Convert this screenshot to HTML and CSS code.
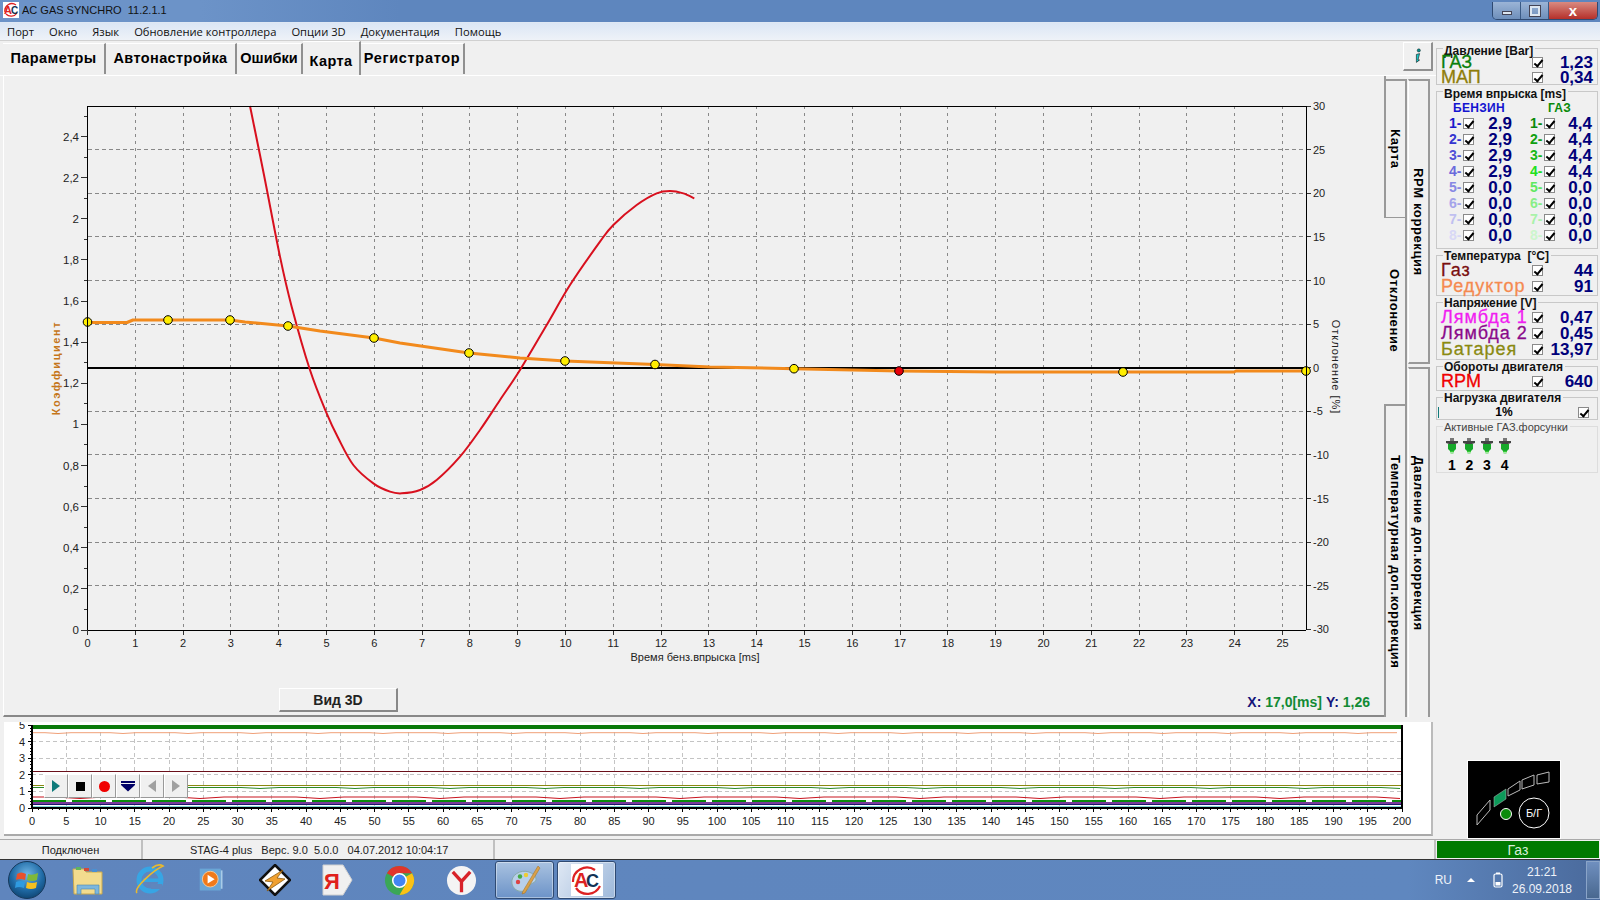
FILE: index.html
```html
<!DOCTYPE html>
<html lang="ru">
<head>
  <meta charset="UTF-8">
  <title>AC GAS SYNCHRO</title>
  <link rel="stylesheet" href="styles.css">
</head>
<body>

<!-- Title bar -->
<div class="titleBar">
  <svg class="titleLogo" viewBox="0 0 16 16">
    <rect width="16" height="16" fill="#fff"/>
    <path d="M2 10 A7 7 0 0 1 13 3" fill="none" stroke="#d22" stroke-width="1.3"/>
    <path d="M3 12 A7 7 0 0 0 14 11" fill="none" stroke="#d22" stroke-width="1.3"/>
    <text x="1" y="12" class="logoA">A</text>
    <text x="8" y="12" class="logoC">C</text>
  </svg>
  <span class="titleText">AC GAS SYNCHRO&nbsp; 11.2.1.1</span>
  <div class="windowBtns">
    <div class="winBtn"><span class="winMin"></span></div>
    <div class="winBtn"><span class="winMax"></span></div>
    <div class="winBtn winClose">x</div>
  </div>
</div>

<!-- Menu -->
<div class="menuBar">
  <span>Порт</span>
  <span>Окно</span>
  <span>Язык</span>
  <span>Обновление контроллера</span>
  <span>Опции 3D</span>
  <span>Документация</span>
  <span>Помощь</span>
</div>

<div class="workArea">
  <div class="leftCol">

    <div class="tabRow">
      <div class="tab tabParams">Параметры</div>
      <div class="tab tabAuto">Автонастройка</div>
      <div class="tab tabErrors">Ошибки</div>
      <div class="tab tabMap active">Карта</div>
      <div class="tab tabLog">Регистратор</div>
      <div class="infoBtn">
        <svg viewBox="0 0 10 20" width="8" height="16">
          <circle cx="6" cy="3" r="2" fill="#0a8f8f" stroke="#000" stroke-width=".5"/>
          <path d="M3 8 L7 7 L5 15 L7 15 L3 18 L3 16 Z" fill="#19c8c8" stroke="#000" stroke-width=".7"/>
        </svg>
      </div>
    </div>

    <div class="tabBody">
      <div class="mapPanel">
        <svg id="mapChart" class="mapChart" viewBox="4 76 1382 604"></svg>
        <div class="mapFooter">
          <div class="view3d">Вид 3D</div>
          <div class="cursorInfo"><b>X:</b> <i>17,0[ms]</i> <b>Y:</b> <i>1,26</i></div>
        </div>
      </div>
      <div class="sideTabs">
        <div class="sideCol colOne">
          <div class="sideTab tabKarta"><span>Карта</span></div>
          <div class="sideTab tabDev"><span>Отклонение</span></div>
          <div class="sideTab tabTemp"><span>Температурная доп.коррекция</span></div>
        </div>
        <div class="sideCol colTwo">
          <div class="sideTab tabRpm"><span>RPM коррекция</span></div>
          <div class="sideTab tabPress"><span>Давление доп.коррекция</span></div>
        </div>
      </div>
    </div>

    <div class="logPanel">
      <svg id="logChart" class="logChart" viewBox="4 722 1429 113"></svg>
      <div class="logTools">
        <div class="logBtn"><span class="icoPlay"></span></div>
        <div class="logBtn"><span class="icoStop"></span></div>
        <div class="logBtn"><span class="icoRec"></span></div>
        <div class="logBtn"><span class="icoDown"></span></div>
        <div class="logBtn"><span class="icoPrev"></span></div>
        <div class="logBtn"><span class="icoNext"></span></div>
      </div>
    </div>
  </div>

  <!-- Live values -->
  <div class="sidebar">
    <div class="group gPress">
      <div class="groupTitle">Давление [Bar]</div>
      <div class="row"><span class="rowName cGas">ГАЗ</span><span class="chk"></span><span class="rowVal">1,23</span></div>
      <div class="row"><span class="rowName cMap">МАП</span><span class="chk"></span><span class="rowVal">0,34</span></div>
    </div>

    <div class="group gInj">
      <div class="groupTitle">Время впрыска [ms]</div>
      <div class="injHead"><span class="headPetrol">БЕНЗИН</span><span class="headGas">ГАЗ</span></div>
      <div class="injRow"><span class="num p1">1-</span><span class="chk"></span><span class="injVal">2,9</span><span class="num g1">1-</span><span class="chk"></span><span class="injVal">4,4</span></div>
      <div class="injRow"><span class="num p2">2-</span><span class="chk"></span><span class="injVal">2,9</span><span class="num g2">2-</span><span class="chk"></span><span class="injVal">4,4</span></div>
      <div class="injRow"><span class="num p3">3-</span><span class="chk"></span><span class="injVal">2,9</span><span class="num g3">3-</span><span class="chk"></span><span class="injVal">4,4</span></div>
      <div class="injRow"><span class="num p4">4-</span><span class="chk"></span><span class="injVal">2,9</span><span class="num g4">4-</span><span class="chk"></span><span class="injVal">4,4</span></div>
      <div class="injRow"><span class="num p5">5-</span><span class="chk"></span><span class="injVal">0,0</span><span class="num g5">5-</span><span class="chk"></span><span class="injVal">0,0</span></div>
      <div class="injRow"><span class="num p6">6-</span><span class="chk"></span><span class="injVal">0,0</span><span class="num g6">6-</span><span class="chk"></span><span class="injVal">0,0</span></div>
      <div class="injRow"><span class="num p7">7-</span><span class="chk"></span><span class="injVal">0,0</span><span class="num g7">7-</span><span class="chk"></span><span class="injVal">0,0</span></div>
      <div class="injRow"><span class="num p8">8-</span><span class="chk"></span><span class="injVal">0,0</span><span class="num g8">8-</span><span class="chk"></span><span class="injVal">0,0</span></div>
    </div>

    <div class="group tallRows gTemp">
      <div class="groupTitle">Температура&nbsp; [°C]</div>
      <div class="row"><span class="rowName cTempGas">Газ</span><span class="chk"></span><span class="rowVal">44</span></div>
      <div class="row"><span class="rowName cReducer">Редуктор</span><span class="chk"></span><span class="rowVal">91</span></div>
    </div>

    <div class="group tallRows gVolt">
      <div class="groupTitle">Напряжение [V]</div>
      <div class="row"><span class="rowName cL1">Лямбда 1</span><span class="chk"></span><span class="rowVal">0,47</span></div>
      <div class="row"><span class="rowName cL2">Лямбда 2</span><span class="chk"></span><span class="rowVal">0,45</span></div>
      <div class="row"><span class="rowName cBat">Батарея</span><span class="chk"></span><span class="rowVal">13,97</span></div>
    </div>

    <div class="group tallRows gRpm">
      <div class="groupTitle">Обороты двигателя</div>
      <div class="row"><span class="rowName cRpm">RPM</span><span class="chk"></span><span class="rowVal">640</span></div>
    </div>

    <div class="group gLoad">
      <div class="groupTitle">Нагрузка двигателя</div>
      <div class="loadRow"><span class="loadBar"></span><span class="loadPct">1%</span><span class="chk"></span></div>
    </div>

    <div class="group gNozzles">
      <div class="groupTitle thin">Активные ГАЗ.форсунки</div>
      <div class="nozzles">
        <div class="nozzle"><svg viewBox="0 0 14 17"><use href="#injector"/></svg><span>1</span></div>
        <div class="nozzle"><svg viewBox="0 0 14 17"><use href="#injector"/></svg><span>2</span></div>
        <div class="nozzle"><svg viewBox="0 0 14 17"><use href="#injector"/></svg><span>3</span></div>
        <div class="nozzle"><svg viewBox="0 0 14 17"><use href="#injector"/></svg><span>4</span></div>
      </div>
    </div>

    <div class="indicator">
      <svg viewBox="0 0 92 77" width="92" height="77">
        <rect width="92" height="77" fill="#000"/>
        <g fill="none" stroke="#bbb" stroke-width="1">
          <path d="M9 54 L22 39 L22 49 L9 64 Z"/>
          <path d="M40 28 L52 20 L52 29 L40 35 Z"/>
          <path d="M54 19 L66 14 L66 24 L54 28 Z"/>
          <path d="M69 14 L81 11 L81 21 L69 23 Z"/>
        </g>
        <path d="M26 36 L38 28 L38 38 L26 46 Z" fill="#0d9a5a" stroke="#bbb" stroke-width=".5"/>
        <circle cx="38" cy="53" r="5.5" fill="#0a8a0a" stroke="#fff"/>
        <circle cx="66" cy="52" r="15" fill="none" stroke="#fff" stroke-width="1"/>
        <text x="66" y="56" class="bgLabel">Б/Г</text>
      </svg>
    </div>
  </div>
</div>

<!-- Status -->
<div class="statusBar">
  <div class="statusCell cellConn">Подключен</div>
  <div class="statusCell cellInfo">STAG-4 plus   Верс. 9.0  5.0.0   04.07.2012 10:04:17</div>
  <div class="statusCell cellRest"></div>
  <div class="fuelState">Газ</div>
</div>

<!-- Taskbar -->
<div class="taskbar">
  <div class="startOrb">
    <svg viewBox="0 0 40 40" width="40" height="40">
      <defs>
        <radialGradient id="orbFill" cx=".5" cy=".35" r=".7">
          <stop offset="0" stop-color="#6fb6e6"/>
          <stop offset=".6" stop-color="#1f6aa5"/>
          <stop offset="1" stop-color="#0c3f6a"/>
        </radialGradient>
      </defs>
      <circle cx="20" cy="20" r="18.5" fill="url(#orbFill)" stroke="#16395c"/>
      <path d="M10 14 Q14 11 19 14 L18 20 Q13 18 9 20 Z" fill="#e8512c"/>
      <path d="M21 14 Q25 16 31 13 L30 20 Q25 22 20 20 Z" fill="#7fb93a"/>
      <path d="M9 22 Q13 20 18 22 L17 28 Q12 26 8 28 Z" fill="#2f9be0"/>
      <path d="M20 22 Q25 24 30 22 L29 28 Q24 30 19 28 Z" fill="#f6c01e"/>
    </svg>
  </div>

  <div class="taskSlot">
    <svg viewBox="0 0 32 32" width="32" height="32">
      <path d="M1 5 H12 L14 8 H30 V30 H2 Z" fill="#f3dc8e" stroke="#c9a94e"/>
      <rect x="4" y="3" width="5" height="3" fill="#5fb55f"/>
      <rect x="12" y="4" width="5" height="3" fill="#d24a3a"/>
      <rect x="20" y="5" width="5" height="3" fill="#4a90d2"/>
      <path d="M5 30 V21 H27 V30 H23 V25 H9 V30 Z" fill="#7db7de" stroke="#4f88ad" stroke-width=".6"/>
    </svg>
  </div>
  <div class="taskSlot">
    <svg viewBox="0 0 32 32" width="32" height="32">
      <circle cx="16" cy="16" r="11" fill="none" stroke="#37a5e4" stroke-width="5"/>
      <rect x="9" y="14.5" width="16" height="3.5" fill="#37a5e4"/>
      <rect x="17" y="20" width="11" height="5" fill="#5f87bd"/>
      <path d="M3 29 C-1 24 20 6 29 2 C26 0 22 1 18 4" fill="none" stroke="#e8b92f" stroke-width="1.6"/>
    </svg>
  </div>
  <div class="taskSlot">
    <svg viewBox="0 0 32 32" width="28" height="28">
      <rect x="2" y="3" width="24" height="25" fill="#6aa6d6"/>
      <rect x="26" y="5" width="2" height="21" fill="#a8cce8"/>
      <circle cx="14" cy="15" r="9" fill="#f07a1a" stroke="#f6d0a0"/>
      <path d="M11 10 L19 15 L11 20 Z" fill="#fff"/>
    </svg>
  </div>
  <div class="taskSlot">
    <svg viewBox="0 0 32 32" width="32" height="32">
      <path d="M16 1 L31 16 L16 31 L1 16 Z" fill="#fff" stroke="#111" stroke-width="2.5"/>
      <path d="M24 6 L6 17 L14 18 L8 27 L26 15 L18 14 Z" fill="#f0a030" stroke="#8a5a10" stroke-width=".8"/>
    </svg>
  </div>
  <div class="taskSlot">
    <svg viewBox="0 0 32 32" width="32" height="32">
      <path d="M2 1 H22 L31 16 L22 31 H2 Z" fill="#f0f0f0" stroke="#d0d0d0"/>
      <text x="11" y="25" class="yaLetter">Я</text>
    </svg>
  </div>
  <div class="taskSlot">
    <svg viewBox="0 0 32 32" width="31" height="31">
      <circle cx="16" cy="16" r="15" fill="#3aa757"/>
      <path d="M16 1 A15 15 0 0 1 29 8.5 L16 8.5 A7.5 7.5 0 0 0 9.5 12.2 L3 8.5 A15 15 0 0 1 16 1 Z" fill="#e0352b"/>
      <path d="M29 8.5 A15 15 0 0 1 16 31 L22.5 19.8 A7.5 7.5 0 0 0 22.5 12.2 Z" fill="#fbc116"/>
      <circle cx="16" cy="16" r="7" fill="#4285f4" stroke="#fff" stroke-width="1.6"/>
    </svg>
  </div>
  <div class="taskSlot">
    <svg viewBox="0 0 32 32" width="31" height="31">
      <circle cx="16" cy="16" r="15" fill="#f4f4f4"/>
      <path d="M7 7 L16 17 L25 7 M16 17 V28" fill="none" stroke="#d8232a" stroke-width="3.4"/>
    </svg>
  </div>

  <div class="taskBtn">
    <svg viewBox="0 0 32 32" width="32" height="32">
      <path d="M3 20 C1 11 12 5 20 8 C28 11 29 17 24 19 C20 20 21 24 18 26 C12 29 5 27 3 20 Z" fill="#b8d0ea" stroke="#8aa"/>
      <circle cx="9" cy="18" r="2.2" fill="#d44"/>
      <circle cx="11" cy="12.5" r="2.2" fill="#4a4"/>
      <circle cx="17" cy="11" r="2.2" fill="#ec3"/>
      <path d="M29 2 L31 4 L16 29 L13 30 L14 27 Z" fill="#d9a14a" stroke="#a06f20" stroke-width=".5"/>
    </svg>
  </div>
  <div class="taskBtn open">
    <svg viewBox="0 0 32 32" width="32" height="32">
      <rect width="32" height="32" fill="#fff"/>
      <path d="M2 18 A14 14 0 0 1 24 6" fill="none" stroke="#d22" stroke-width="2.2"/>
      <path d="M5 24 A14 14 0 0 0 29 22" fill="none" stroke="#d22" stroke-width="2.2"/>
      <text x="3" y="23" class="acA">A</text>
      <text x="15" y="23" class="acC">C</text>
    </svg>
  </div>

  <div class="tray">
    <span class="trayLang">RU</span>
    <span class="trayArrow"></span>
    <svg viewBox="0 0 10 16" width="10" height="16">
      <rect x="1" y="2" width="8" height="13" rx="1.5" fill="none" stroke="#fff" stroke-width="1.2"/>
      <rect x="3" y="0.5" width="4" height="1.5" fill="#fff"/>
      <rect x="2.5" y="10" width="5" height="3.5" fill="#fff"/>
    </svg>
    <div class="clock">21:21<br>26.09.2018</div>
    <div class="showDesktop"></div>
  </div>
</div>

<svg class="defs" width="0" height="0">
  <symbol id="injector" viewBox="0 0 14 17">
    <rect x="5" y="0" width="4" height="3" fill="#777"/>
    <path d="M1 3 H13 V5 L10 6 H4 L1 5 Z" fill="#444"/>
    <path d="M3 6 H11 V11 L9 13 H5 L3 11 Z" fill="#17a82a"/>
    <rect x="5" y="13" width="4" height="1.4" fill="#3c3"/>
    <rect x="5.5" y="15" width="3" height="1" fill="#9ee49e"/>
  </symbol>
</svg>

<script src="chart.js"></script>
</body>
</html>
```

FILE: styles.css
```css
* { box-sizing: border-box; }

body {
  margin: 0;
  width: 1600px;
  height: 900px;
  overflow: hidden;
  display: flex;
  flex-direction: column;
  font-family: "Liberation Sans", Arial, sans-serif;
  background: #f0f0f0;
  color: #000;
}

.defs { position: absolute; }

/* title + menu */
.titleBar {
  height: 23px;
  flex: none;
  display: flex;
  align-items: center;
  padding-left: 3px;
  padding-bottom: 3px;
  background: linear-gradient(90deg, #6c93c8 0, #6c93c8 200px, #5e86be 400px, #5e86be 100%);
  border-bottom: 1px solid #dfe8f4;
}
.titleLogo { width: 16px; height: 16px; margin-right: 3px; }
.logoA { font: bold 11px "Liberation Sans", sans-serif; fill: #d22; }
.logoC { font: bold 10px "Liberation Sans", sans-serif; fill: #135; }
.titleText { font-size: 11px; color: #111; }

.windowBtns {
  margin-left: auto;
  margin-right: 2px;
  margin-top: 2px;
  display: flex;
  align-self: flex-start;
  height: 18px;
  border: 1px solid #2f4a72;
  border-top: 0;
  border-radius: 0 0 5px 5px;
  overflow: hidden;
}
.winBtn {
  width: 28px;
  display: flex;
  align-items: center;
  justify-content: center;
  background: linear-gradient(#9bb4d6, #6e8fbb);
  border-right: 1px solid #3a5a85;
}
.winMin { width: 10px; height: 4px; margin-top: 5px; background: #dde6f0; border: 1px solid #445; }
.winMax { width: 10px; height: 10px; background: transparent; border: 2px solid #dde6f0; outline: 1px solid #445; }
.winClose {
  width: 48px;
  border-right: 0;
  background: linear-gradient(#d98a80, #b5302a);
  color: #fff;
  font-weight: bold;
  font-size: 15px;
  line-height: 14px;
}

.menuBar {
  height: 18px;
  flex: none;
  display: flex;
  align-items: center;
  padding-left: 7px;
  font-family: "Open Sans", sans-serif;
  font-size: 11.2px;
  background: linear-gradient(#dbe6f5, #eef2f8);
  border-bottom: 1px solid #d0d0d0;
  color: #111;
}
.menuBar span { margin-right: 15px; white-space: nowrap; }

/* main */
.workArea { flex: 1; min-height: 0; display: flex; }
.leftCol { width: 1436px; display: flex; flex-direction: column; }

.tabRow {
  height: 35px;
  flex: none;
  display: flex;
  align-items: flex-end;
  padding-left: 3px;
  border-bottom: 1px solid #fff;
}
.tab {
  height: 31px;
  display: flex;
  align-items: center;
  justify-content: center;
  padding-bottom: 2px;
  font-size: 14.5px;
  font-weight: bold;
  letter-spacing: .4px;
  border-right: 2px solid #909090;
  border-top: 1px solid #fff;
  margin-bottom: 1px;
}
.tabParams { width: 103px; }
.tabAuto { width: 131px; }
.tabErrors { width: 66px; letter-spacing: 0; }
.tabMap { width: 58px; }
.tabLog { width: 104px; letter-spacing: .7px; }
.tab.active { height: 34px; margin-bottom: 0; background: #f0f0f0; font-size: 14.5px; padding-top: 4px; padding-bottom: 0; }

.infoBtn {
  margin-left: auto;
  margin-right: 3px;
  margin-bottom: 4px;
  width: 30px;
  height: 29px;
  display: flex;
  align-items: center;
  justify-content: center;
  border: 1px solid #fff;
  border-right: 2px solid #909090;
  border-bottom: 2px solid #909090;
}

.tabBody { height: 641px; flex: none; display: flex; padding-left: 3px; }
.mapPanel {
  width: 1383px;
  display: flex;
  flex-direction: column;
  border-left: 1px solid #fff;
  border-bottom: 2px solid #888;
  border-right: 2px solid #999;
}
.mapChart { width: 1382px; height: 604px; flex: none; display: block; }
.mapFooter { flex: 1; display: flex; align-items: flex-start; padding-left: 275px; padding-top: 8px; }
.view3d {
  width: 119px;
  height: 24px;
  display: flex;
  align-items: center;
  justify-content: center;
  font-size: 14px;
  font-weight: bold;
  color: #222;
  border: 1px solid #fff;
  border-right: 2px solid #888;
  border-bottom: 2px solid #888;
}
.cursorInfo {
  margin-left: auto;
  margin-right: 14px;
  margin-top: 6px;
  font-size: 14px;
  font-weight: bold;
  white-space: nowrap;
}
.cursorInfo b { color: #14147a; }
.cursorInfo i { font-style: normal; color: #128a34; }

/* tabs on their side */
.sideTabs { width: 44px; display: flex; padding-top: 3px; }
.sideCol { display: flex; flex-direction: column; }
.colOne { width: 21px; }
.colTwo { width: 22px; margin-left: 1px; }
.sideTab {
  display: flex;
  justify-content: center;
  font-size: 13px;
  font-weight: bold;
  letter-spacing: .6px;
  border-right: 2px solid #999;
  border-top: 2px solid #999;
  border-left: 1px solid #fff;
  writing-mode: vertical-rl;
  align-items: center;
}
.tabKarta { height: 139px; border-left: 2px solid #999; border-bottom: 1px solid #999; margin-left: -2px; }
.tabDev { height: 186px; border-top: 0; border-left: 0; margin-left: -2px; background: #f0f0f0; }
.tabTemp { flex: 1; border-left: 2px solid #999; margin-left: -2px; }
.tabRpm { height: 285px; border-bottom: 2px solid #999; }
.tabPress { flex: 1; margin-top: 3px; }

.logPanel {
  height: 114px;
  flex: none;
  margin: 5px 3px 3px 4px;
  position: relative;
  background: #fff;
  border-right: 2px solid #bbb;
  border-bottom: 2px solid #aaa;
}
.logChart { width: 1429px; height: 113px; display: block; }
.logTools { position: absolute; left: 40px; top: 52px; display: flex; }
.logBtn {
  width: 24px;
  height: 24px;
  display: flex;
  align-items: center;
  justify-content: center;
  background: #f0f0f0;
  border: 1px solid #fff;
  border-right: 1px solid #999;
  border-bottom: 1px solid #999;
}
.icoPlay { border-left: 8px solid #0e7a7a; border-top: 6px solid transparent; border-bottom: 6px solid transparent; }
.icoStop { width: 9px; height: 9px; background: #000; }
.icoRec { width: 11px; height: 11px; border-radius: 50%; background: #f00000; }
.icoDown { width: 14px; height: 11px; background: linear-gradient(#006 0, #006 2px, #f0f0f0 2px, #f0f0f0 3px, #006 3px); clip-path: polygon(0 0, 100% 0, 100% 40%, 50% 100%, 0 40%); }
.icoPrev { border-right: 8px solid #a0a0a0; border-top: 6px solid transparent; border-bottom: 6px solid transparent; }
.icoNext { border-left: 8px solid #a0a0a0; border-top: 6px solid transparent; border-bottom: 6px solid transparent; }

/* right column */
.sidebar {
  flex: 1;
  display: flex;
  flex-direction: column;
  gap: 6px;
  padding: 7px 2px 1px 0;
}
.group { border: 1px solid #c8c8c8; padding: 0 4px 0 4px; flex: none; }
.gPress { height: 37px; }
.gInj { height: 158px; }
.gTemp { height: 41px; }
.gVolt { height: 58px; }
.gRpm { height: 25px; }
.gLoad { height: 23px; }
.gNozzles { height: 47px; border-color: #ddd; }

.groupTitle {
  display: table;
  margin: -7px 0 -1px 2px;
  padding: 0 2px 0 1px;
  height: 14px;
  line-height: 14px;
  font-size: 12px;
  font-weight: bold;
  background: #f0f0f0;
  color: #111;
  white-space: nowrap;
}
.gPress .groupTitle, .gInj .groupTitle { margin: -5px 0 -3px 2px; }
.groupTitle.thin { font-weight: normal; font-size: 11px; color: #444; }

.row {
  height: 15px;
  display: grid;
  grid-template-columns: 91px 12px 1fr;
  align-items: center;
  position: relative;
}
.tallRows .row { height: 16px; }
.rowName {
  font-size: 18px;
  line-height: 15px;
  white-space: nowrap;
  letter-spacing: 1px;
  -webkit-text-stroke: .3px;
}
.rowVal, .injVal {
  font-size: 17px;
  font-weight: bold;
  line-height: 15px;
  text-align: right;
  color: #00007a;
}
.cGas { color: #0a7f0a; letter-spacing: 0; }
.cMap { color: #8f7d0a; letter-spacing: 0; }
.cTempGas { color: #7a0f0f; }
.cReducer { color: #f58a50; }
.cL1 { color: #f020f0; }
.cL2 { color: #8a0a8a; }
.cBat { color: #8a8a10; }
.cRpm { color: #f00000; letter-spacing: 0; }

.chk {
  width: 11px;
  height: 11px;
  background: #fff;
  border: 1px solid #8a8a8a;
  position: relative;
}
.chk::after {
  content: "";
  position: absolute;
  left: 3px;
  top: 0;
  width: 3px;
  height: 7px;
  border-right: 2px solid #000;
  border-bottom: 2px solid #000;
  transform: rotate(40deg);
}

.injHead {
  height: 15px;
  margin-top: 2px;
  display: grid;
  grid-template-columns: 85px 1fr;
  font-size: 12px;
  font-weight: bold;
  line-height: 16px;
  letter-spacing: .3px;
  position: relative;
}
.headPetrol { color: #1414d0; padding-left: 12px; }
.headGas { color: #0a8a0a; padding-left: 22px; }
.injRow {
  height: 16px;
  display: grid;
  grid-template-columns: 14px 11px 38px 32px 11px 1fr;
  align-items: center;
  padding-left: 8px;
  padding-right: 1px;
}
.num { font-size: 14px; font-weight: bold; line-height: 15px; }
.injVal + .num { padding-left: 18px; }
.p1 { color: #1a1acc; } .p2 { color: #3535d0; } .p3 { color: #5050d6; } .p4 { color: #6a6adc; }
.p5 { color: #8888e4; } .p6 { color: #a4a4ea; } .p7 { color: #c0c0f0; } .p8 { color: #d8d8f6; }
.g1 { color: #0a8a0a; } .g2 { color: #10a010; } .g3 { color: #18b818; } .g4 { color: #20e020; }
.g5 { color: #60e860; } .g6 { color: #88ee88; } .g7 { color: #aaf2aa; } .g8 { color: #ccf6cc; }

.loadRow {
  height: 16px;
  display: grid;
  grid-template-columns: 1px 130px 12px;
  align-items: center;
  margin-left: -3px;
  position: relative;
}
.loadBar { height: 11px; background: #117a7a; }
.loadPct { font-size: 12px; font-weight: bold; text-align: center; }
.loadRow .chk { margin-left: 9px; }

.nozzles { display: flex; padding-left: 2px; margin-top: 5px; }
.nozzle { width: 17.6px; display: flex; flex-direction: column; align-items: center; }
.nozzle svg { width: 14px; height: 17px; }
.nozzle span { font-size: 14px; font-weight: bold; line-height: 14px; margin-top: 3px; }

.indicator { margin-top: auto; margin-left: 32px; width: 92px; height: 77px; outline: 1px solid #fff; }
.bgLabel { font: 11px "Liberation Sans", sans-serif; fill: #fff; text-anchor: middle; }

/* status */
.statusBar {
  height: 21px;
  flex: none;
  display: flex;
  align-items: center;
  border-top: 1px solid #aaa;
  border-bottom: 1px solid #333;
  font-size: 11px;
}
.statusCell { height: 100%; display: flex; align-items: center; border-right: 2px solid #c0c0c0; white-space: pre; color: #222; }
.cellConn { width: 143px; justify-content: center; }
.cellInfo { width: 352px; padding-left: 47px; }
.cellRest { width: 941px; }
.fuelState {
  width: 162px;
  height: 17px;
  margin-left: 1px;
  display: flex;
  align-items: center;
  justify-content: center;
  background: #007a00;
  color: #d8f0d8;
  font-size: 14px;
}

/* windows taskbar */
.taskbar {
  height: 40px;
  flex: none;
  display: flex;
  align-items: center;
  background: linear-gradient(90deg, #5f85bd, #5f87bf 88%, #4a6a9c 100%);
}
.startOrb { width: 57px; display: flex; justify-content: center; padding-right: 4px; }
.taskSlot { width: 62.2px; display: flex; justify-content: center; }
.taskBtn {
  width: 59px;
  height: 38px;
  margin-left: 3px;
  display: flex;
  align-items: center;
  justify-content: center;
  border: 1px solid #2f4a72;
  border-radius: 3px;
  background: linear-gradient(#a9c2e0, #6c93c8);
  box-shadow: inset 0 0 0 1px rgba(255,255,255,.4);
}
.taskBtn.open { background: linear-gradient(120deg, #dfe8f4, #9db8da); }
.yaLetter { font: bold 22px "Liberation Sans", sans-serif; fill: #e0201c; text-anchor: middle; }
.acA { font: bold 20px "Liberation Sans", sans-serif; fill: #d22; }
.acC { font: bold 18px "Liberation Sans", sans-serif; fill: #135; }

.tray {
  margin-left: auto;
  height: 100%;
  display: flex;
  align-items: center;
  color: #eef2f8;
  font-size: 12px;
}
.trayLang { margin-right: 15px; }
.trayArrow { border-bottom: 4px solid #fff; border-left: 4px solid transparent; border-right: 4px solid transparent; margin-right: 18px; }
.clock { width: 72px; margin-left: 3px; margin-right: 8px; padding-top: 2px; text-align: center; line-height: 17px; }
.showDesktop { width: 14px; height: 38px; border: 1px solid #8aa4c8; background: linear-gradient(#6f8fbf, #49688f); }
```

FILE: chart.js
```js
const NS = "http://www.w3.org/2000/svg";

function add(svg, tag, attrs, text) {
  const el = document.createElementNS(NS, tag);
  for (const k in attrs) el.setAttribute(k, attrs[k]);
  if (text !== undefined) el.textContent = text;
  svg.appendChild(el);
  return el;
}

function line(svg, x1, y1, x2, y2, color, width, dash) {
  const a = { x1, y1, x2, y2, stroke: color, "stroke-width": width || 1, "shape-rendering": "crispEdges" };
  if (dash) a["stroke-dasharray"] = dash;
  add(svg, "line", a);
}

function poly(svg, pts, color, width) {
  add(svg, "polyline", {
    points: pts.map(p => p.join(",")).join(" "),
    fill: "none", stroke: color, "stroke-width": width, "stroke-linejoin": "round"
  });
}

function label(svg, x, y, text, anchor, extra) {
  add(svg, "text", Object.assign({
    x, y, "text-anchor": anchor || "middle",
    "font-family": "Liberation Sans", "font-size": 11, fill: "#222"
  }, extra || {}), text);
}

function smooth(svg, pts, color, width) {
  // catmull-rom through measured points
  let d = "M" + pts[0].join(" ");
  for (let i = 0; i < pts.length - 1; i++) {
    const p0 = pts[i - 1] || pts[i], p1 = pts[i], p2 = pts[i + 1], p3 = pts[i + 2] || p2;
    const c1 = [p1[0] + (p2[0] - p0[0]) / 6, p1[1] + (p2[1] - p0[1]) / 6];
    const c2 = [p2[0] - (p3[0] - p1[0]) / 6, p2[1] - (p3[1] - p1[1]) / 6];
    d += " C" + c1.join(" ") + " " + c2.join(" ") + " " + p2.join(" ");
  }
  add(svg, "path", { d, fill: "none", stroke: color, "stroke-width": width });
}

function drawMap() {
  const svg = document.getElementById("mapChart");
  const L = 87.5, R = 1306, T = 106, B = 630;
  const X = v => L + 47.8 * v;
  const YR = v => 367.7 - 8.72 * v;
  const YL = v => B - 205.6 * v;

  for (let v = 1; v <= 25; v++) line(svg, X(v), T, X(v), B, "#888", 1, "3 4");
  for (let v = -25; v <= 25; v += 5) {
    if (v !== 0) line(svg, L, YR(v), R, YR(v), "#888", 1, "4 3");
  }

  // left axis
  for (let i = 0; i <= 25; i++) {
    const y = YL(i / 10);
    line(svg, i % 2 ? 84 : 81, y, L, y, "#333");
  }
  for (let i = 0; i <= 12; i++) {
    const txt = String(i / 5).replace(".", ",");
    label(svg, 79, YL(i / 5) + 4, txt, "end", { "font-size": 11.5 });
  }
  // right axis
  for (let v = -30; v <= 30; v += 5) {
    line(svg, R, YR(v), R + 5, YR(v), "#333");
    label(svg, R + 7, YR(v) + 4, String(v), "start");
  }
  // bottom axis
  for (let v = 0; v <= 25; v++) {
    line(svg, X(v), B, X(v), B + 5, "#333");
    label(svg, X(v), B + 17, String(v));
  }

  label(svg, 695, 661, "Время бенз.впрыска [ms]");
  add(svg, "text", {
    transform: "translate(60 368) rotate(-90)", "text-anchor": "middle",
    "font-family": "Liberation Sans", "font-size": 11, "font-weight": "bold",
    "letter-spacing": 1.6, fill: "#c5761a"
  }, "Коэффициент");
  add(svg, "text", {
    transform: "translate(1332 367) rotate(90)", "text-anchor": "middle",
    "font-family": "Liberation Sans", "font-size": 11,
    "letter-spacing": 1, fill: "#222"
  }, "Отклонение [%]");

  line(svg, L, 367.7, R, 367.7, "#000", 2);

  const zoomed = [[0,230],[35,380],[90,570],[140,700],[175,775],[220,855],[280,910],[330,935],[365,940],
    [420,930],[470,900],[540,830],[600,750],[660,660],[720,570],[800,435],[870,315],[960,185],[1000,135],
    [1070,75],[1130,40],[1170,33],[1210,40],[1243,55]].map(p => [280 + p[0] / 3, 180 + p[1] / 3]);
  smooth(svg, [[250,106],[264,175]].concat(zoomed), "#d8101e", 2);

  poly(svg, [[87.5,322.5],[127,322.5],[133,320],[230,320],[245,322],[288,326],[320,331],[374,338],[400,343],
    [469,353],[520,358],[565,361],[655,364.5],[710,367],[794,368.7],[899,371],[1000,372],[1123,372],[1234,372],[1236,371],[1306,371]],
    "#f28a1c", 3);

  const dots = [[87.5,322],[168,320],[230,320],[288,326],[374,338],[469,353],[565,361],[655,364.5],[794,368.7],[1123,372],[1306,371]];
  dots.forEach(p => add(svg, "circle", { cx: p[0], cy: p[1], r: 4.3, fill: "#ffee00", stroke: "#000" }));
  add(svg, "circle", { cx: 899, cy: 371, r: 4.3, fill: "#e8000c", stroke: "#000" });

  line(svg, L, T, L, B, "#000");
  line(svg, R, T, R, B, "#000");
  line(svg, L, T, R, T, "#000");
  line(svg, L, B, R, B, "#000");
}

function drawLog() {
  const svg = document.getElementById("logChart");
  const L = 32, R = 1402, T = 725, B = 808;
  const X = v => L + 6.85 * v;
  const Y = v => B - 16.6 * v;

  for (let v = 5; v < 200; v += 5) line(svg, X(v), T, X(v), B, "#c4c4c4", 1, "4 3");
  for (let v = 1; v <= 4; v++) line(svg, L, Y(v), R, Y(v), "#c4c4c4", 1, "4 3");

  // short steps here and there, the signal is almost flat
  const wobble = (y, amp, step) => {
    const pts = [];
    for (let x = L, i = 0; x <= R; x += step, i++) {
      pts.push([x, y + (i % 5 === 2 ? amp : 0)]);
    }
    return pts;
  };

  line(svg, L, 727, R, 727, "#0a7a0a", 4);
  poly(svg, wobble(732.7, .8, 13), "#f0a078", 1);
  line(svg, L, 771, R, 771, "#6a0f1a", 1);
  line(svg, L, 785, R, 785, "#8a8a10", 1);
  poly(svg, wobble(787.5, 1, 19), "#2a8a2a", 1);
  poly(svg, wobble(797, 1.5, 24), "#c8141e", 1);
  line(svg, L, 800.5, R, 800.5, "#0a8a0a", 2, "34 6");
  line(svg, L, 802.5, R, 802.5, "#7a3a9a", 2);
  line(svg, L, 804, R, 804, "#18186a", 1);
  line(svg, L, 806, R, 806, "#80dada", 1);

  for (let v = 0; v <= 200; v++) {
    line(svg, X(v), B, X(v), B + (v % 5 ? 2 : 4), "#000");
  }
  for (let v = 0; v <= 200; v += 5) label(svg, X(v), B + 17, String(v));
  for (let v = 0; v <= 5; v++) {
    label(svg, 25, Y(v) + 4, String(v), "end");
    line(svg, 28, Y(v), L, Y(v), "#000");
  }
  for (let i = 0; i <= 25; i++) line(svg, 30, B - i * 3.32, L, B - i * 3.32, "#000");

  line(svg, L, T, L, B, "#000", 2);
  line(svg, R, T, R, B, "#000", 2);
  line(svg, L, B, R, B, "#000", 2);
}

drawMap();
drawLog();
```
